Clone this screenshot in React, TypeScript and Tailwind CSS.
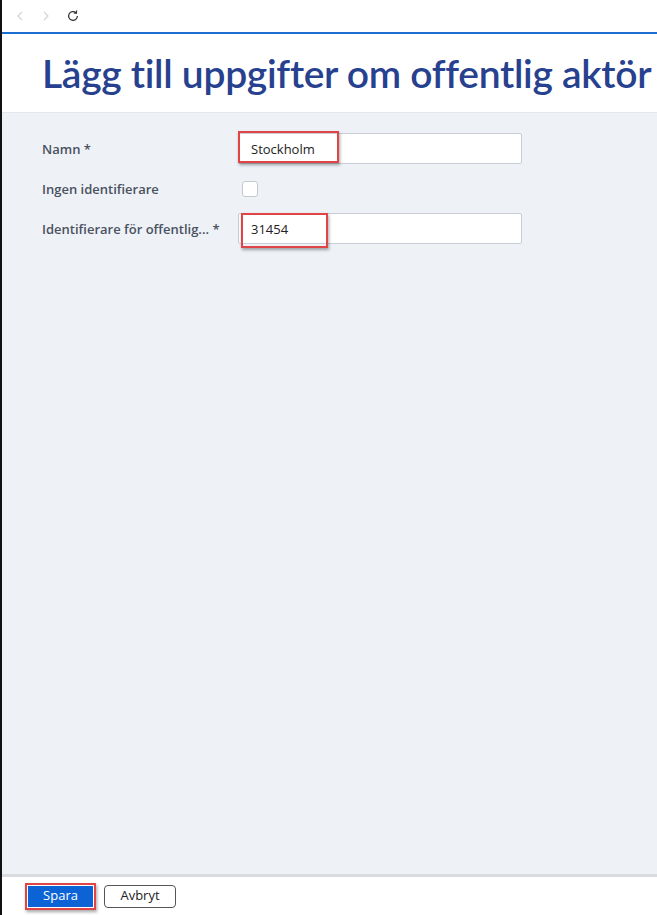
import React, { useState } from 'react';

const font = { fontFamily: '"Open Sans", "Noto Sans", sans-serif' };

const App: React.FC = () => {
    const [name, setName] = useState<string>('Stockholm');
    const [noId, setNoId] = useState<boolean>(false);
    const [orgId, setOrgId] = useState<string>('31454');

    return (
        <div className="h-[915px] flex flex-col border-l-2 border-[#111] bg-white overflow-hidden" style={font}>
            {/* browser-ish nav strip */}
            <div className="h-[34px] flex items-center gap-[14px] pl-[12px] border-b-2 border-[#1b6fd1] shrink-0">
                <svg className="w-[12px] h-[12px]" viewBox="0 0 12 12" fill="none" stroke="#d4d4d4" strokeWidth="1.2">
                    <path d="M8 2L4 6l4 4" />
                </svg>
                <svg className="w-[12px] h-[12px]" viewBox="0 0 12 12" fill="none" stroke="#d4d4d4" strokeWidth="1.2">
                    <path d="M4 2l4 4-4 4" />
                </svg>
                <svg className="w-[14px] h-[14px]" viewBox="0 0 16 16" fill="none" stroke="#333" strokeWidth="1.4">
                    <path d="M13 8a5 5 0 1 1-1.5-3.6" />
                    <path d="M12 1.8v3h-3" />
                </svg>
            </div>

            <div className="h-[79px] flex items-center pl-[40px] border-b border-[#e3e6ea] shrink-0">
                <h1
                    className="text-[39px] font-semibold text-[#27418f] leading-none tracking-[-0.3px] whitespace-nowrap"
                    style={{ fontFamily: 'Lato, "Open Sans", sans-serif' }}
                >
                    Lägg till uppgifter om offentlig aktör
                </h1>
            </div>

            <div className="flex-1 bg-[#eef2f7] pt-[20px] pl-[40px] border-b-[3px] border-[#d9dbde]">
                <div className="grid grid-cols-[196px_284px] gap-y-[16px] items-center">
                    <label className="text-[13px] leading-[16px] font-semibold text-[#4a5160]">Namn *</label>
                    <div className="relative h-[31px]">
                        <input
                            value={name}
                            onChange={(e) => setName(e.target.value)}
                            className="w-full h-full bg-white border border-[#c9ced6] rounded-[2px] pl-[12px] text-[13px] text-[#222] outline-none"
                        />
                        <div className="absolute left-0 top-[-2px] w-[101px] h-[32px] border-2 border-[#e04444] shadow-[1px_2px_3px_rgba(0,0,0,0.35)] pointer-events-none" />
                    </div>

                    <label className="text-[13px] leading-[16px] font-semibold text-[#4a5160]">Ingen identifierare</label>
                    <div className="h-[17px] flex items-center pl-[4px]">
                        <input
                            type="checkbox"
                            checked={noId}
                            onChange={(e) => setNoId(e.target.checked)}
                            className="appearance-none w-[16px] h-[16px] bg-white border border-[#c4c9d1] rounded-[3px]"
                        />
                    </div>

                    <label className="text-[13px] leading-[16px] font-semibold text-[#4a5160] whitespace-nowrap">
                        Identifierare för offentlig... *
                    </label>
                    <div className="relative h-[31px]">
                        <input
                            value={orgId}
                            onChange={(e) => setOrgId(e.target.value)}
                            className="w-full h-full bg-white border border-[#c9ced6] rounded-[2px] pl-[12px] text-[13px] text-[#222] outline-none"
                        />
                        <div className="absolute left-[3px] top-0 w-[87px] h-[35px] border-2 border-[#e04444] shadow-[1px_2px_3px_rgba(0,0,0,0.35)] pointer-events-none" />
                    </div>
                </div>
            </div>

            <div className="h-[38px] flex items-center gap-[8px] pl-[23px] bg-white shrink-0">
                <button className="h-[27px] px-[1px] border-2 border-[#e04444] shadow-[1px_2px_3px_rgba(0,0,0,0.35)] flex items-center">
                    <span className="h-[21px] w-[65px] bg-[#0b63d6] text-white text-[13px] flex items-center justify-center">
                        Spara
                    </span>
                </button>
                <button className="h-[23px] w-[72px] border border-[#555] rounded-[4px] bg-white text-[13px] text-[#222]">
                    Avbryt
                </button>
            </div>
        </div>
    );
};

export default App;
